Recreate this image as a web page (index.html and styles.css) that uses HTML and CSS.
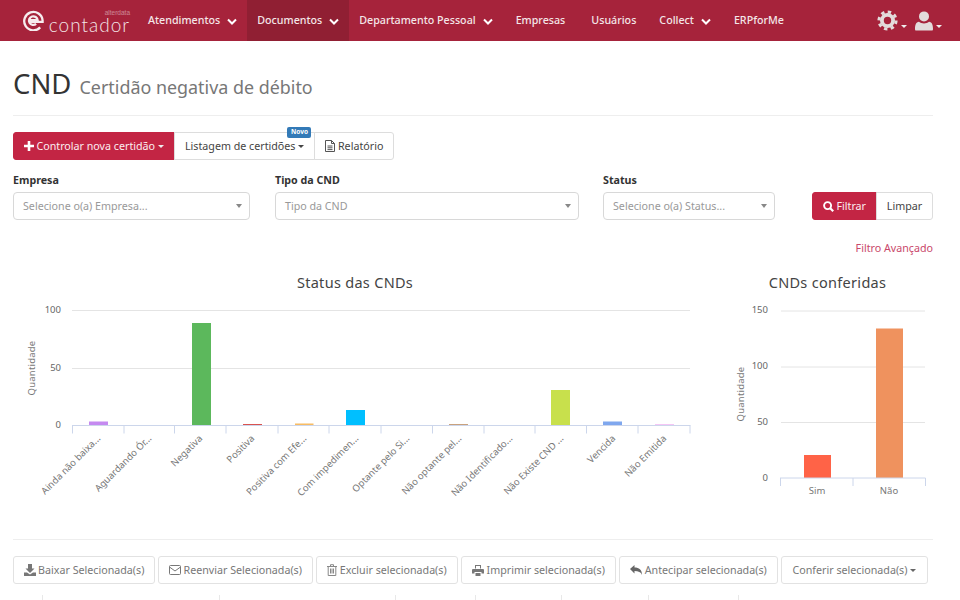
FILE: index.html
```html
<!DOCTYPE html>
<html lang="pt-BR">
<head>
<meta charset="utf-8">
<title>CND</title>
<link rel="stylesheet" href="styles.css">
</head>
<body>
<nav class="navbar">
  <a class="brand">
    <svg class="brand-icon" width="21" height="21" viewBox="0 0 21 21" fill="none" stroke="#f6ecee" stroke-width="2.300"><path d="M6.200 10.200h8.400a4.300 4.300 0 1 0-1.500 3.700"/><path d="M17.200 17.400A9.200 9.200 0 1 1 19.600 10.500v1.300H6.500"/></svg>
    <span class="brand-text"><small>alterdata</small><b>contador</b></span>
  </a>
  <a class="nav-item drop">Atendimentos<svg class="chev" width="10" height="7" viewBox="0 0 10 7"><path d="M1 1.500l4 4 4-4" fill="none" stroke="#fff" stroke-width="2"/></svg></a>
  <a class="nav-item drop active">Documentos<svg class="chev" width="10" height="7" viewBox="0 0 10 7"><path d="M1 1.500l4 4 4-4" fill="none" stroke="#fff" stroke-width="2"/></svg></a>
  <a class="nav-item drop">Departamento Pessoal<svg class="chev" width="10" height="7" viewBox="0 0 10 7"><path d="M1 1.500l4 4 4-4" fill="none" stroke="#fff" stroke-width="2"/></svg></a>
  <a class="nav-item plain">Empresas</a>
  <a class="nav-item plain">Usuários</a>
  <a class="nav-item drop">Collect<svg class="chev" width="10" height="7" viewBox="0 0 10 7"><path d="M1 1.500l4 4 4-4" fill="none" stroke="#fff" stroke-width="2"/></svg></a>
  <a class="nav-item plain">ERPforMe</a>
  <div class="nav-tools">
    <span class="tool">
      <svg width="21" height="21" viewBox="0 0 21 21"><circle cx="10.500" cy="10.500" r="5.600" fill="none" stroke="#e3dcdc" stroke-width="3.800"/><circle cx="10.500" cy="10.500" r="8.600" fill="none" stroke="#e3dcdc" stroke-width="3" stroke-dasharray="3.400 3.350"/></svg>
      <i class="caret light"></i>
    </span>
    <span class="tool">
      <svg width="18" height="20" viewBox="0 0 18 20"><circle cx="9" cy="5.400" r="5" fill="#e3dcdc"/><path d="M1 19.500c-.8 0-1-.6-1-1.500 0-3.800 1-7 4-7.200 1.300 1 3 1.600 5 1.600s3.700-.6 5-1.600c3 .2 4 3.400 4 7.200 0 .9-.2 1.500-1 1.500z" fill="#e3dcdc"/></svg>
      <i class="caret light"></i>
    </span>
  </div>
</nav>

<main class="page">
  <header class="page-header">
    <h1>CND <small>Certidão negativa de débito</small></h1>
  </header>

  <div class="btn-group top-group">
    <button class="btn primary"><svg class="ico" width="10" height="10" viewBox="0 0 10 10"><path d="M3.700 0h2.600v3.700H10v2.600H6.300V10H3.700V6.300H0V3.700h3.700z" fill="#fff"/></svg>Controlar nova certidão<i class="caret light"></i></button>
    <button class="btn has-badge">Listagem de certidões<i class="caret"></i><span class="badge">Novo</span></button>
    <button class="btn"><svg class="ico" width="10" height="12" viewBox="0 0 10 12" fill="none" stroke="#555" stroke-width="1"><path d="M.5.500h6l3 3v8h-9zM6.500.500v3h3M2.500 6h5M2.500 7.800h5M2.500 9.600h5"/></svg>Relatório</button>
  </div>

  <form class="filters">
    <div class="field f-empresa"><label>Empresa</label><div class="select">Selecione o(a) Empresa...<i class="caret grey"></i></div></div>
    <div class="field f-tipo"><label>Tipo da CND</label><div class="select">Tipo da CND<i class="caret grey"></i></div></div>
    <div class="field f-status"><label>Status</label><div class="select">Selecione o(a) Status...<i class="caret grey"></i></div></div>
    <div class="btn-group filter-actions">
      <button type="button" class="btn primary filter-btn"><svg class="ico" width="11" height="11" viewBox="0 0 11 11" fill="none" stroke="#fff"><circle cx="4.600" cy="4.600" r="3.500" stroke-width="1.900"/><path d="M7.200 7.200l3 3" stroke-width="2.200"/></svg>Filtrar</button>
      <button type="button" class="btn limpar">Limpar</button>
    </div>
  </form>
  <div class="advanced"><a>Filtro Avançado</a></div>

  <section class="charts">
    <svg class="chart chart-status" width="690" height="240" viewBox="0 0 690 240">
      <text class="title" x="342" y="23.500" text-anchor="middle">Status das CNDs</text>
      <path class="grid" d="M59 46.500H677M59 104.500H677"/>
      <g class="ylab" text-anchor="end"><text x="48" y="49">100</text><text x="48" y="107">50</text><text x="48" y="164">0</text></g>
      <text class="ytitle" transform="translate(22 104) rotate(-90)" text-anchor="middle">Quantidade</text>
      <g>
        <rect x="76" y="157.500" width="19" height="4" fill="#c58af0"/>
        <rect x="179" y="59" width="19" height="102.500" fill="#5cb85c"/>
        <rect x="230" y="160" width="19" height="1.500" fill="#d9534f"/>
        <rect x="282" y="159.500" width="18.500" height="2" fill="#f8bc63"/>
        <rect x="333" y="146" width="19" height="15.500" fill="#00bfff"/>
        <rect x="436" y="160" width="19" height="1.500" fill="#c9a27e"/>
        <rect x="538" y="126" width="19" height="35.500" fill="#c8e04c"/>
        <rect x="590" y="157.500" width="19" height="4" fill="#7fa7ee"/>
        <rect x="642" y="160" width="19" height="1.500" fill="#f5c6f5"/>
      </g>
      <path class="axis" d="M59 161.500H677.500M59.500 161.500v8M111 161.500v8M161.500 161.500v8M213 161.500v8M265 161.500v8M316 161.500v8M368 161.500v8M419.500 161.500v8M471 161.500v8M522 161.500v8M573.500 161.500v8M625 161.500v8M677 161.500v8"/>
      <g class="xlab" text-anchor="end">
        <text transform="translate(88 175) rotate(-45)">Ainda não baixa...</text>
        <text transform="translate(139 175) rotate(-45)">Aguardando Ór...</text>
        <text transform="translate(190 175) rotate(-45)">Negativa</text>
        <text transform="translate(242 175) rotate(-45)">Positiva</text>
        <text transform="translate(294 175) rotate(-45)">Positiva com Efe...</text>
        <text transform="translate(346 175) rotate(-45)">Com impedimen...</text>
        <text transform="translate(397 175) rotate(-45)">Optante pelo Si...</text>
        <text transform="translate(449 175) rotate(-45)">Não optante pel...</text>
        <text transform="translate(500 175) rotate(-45)">Não Identificado...</text>
        <text transform="translate(551 175) rotate(-45)">Não Existe CND ...</text>
        <text transform="translate(603 175) rotate(-45)">Vencida</text>
        <text transform="translate(654 175) rotate(-45)">Não Emitida</text>
      </g>
    </svg>
    <svg class="chart chart-conf" width="233" height="240" viewBox="0 0 233 240">
      <text class="title" x="127.500" y="23.500" text-anchor="middle">CNDs conferidas</text>
      <path class="grid" d="M81 47H225M81 103H225M81 158.500H225"/>
      <g class="ylab" text-anchor="end"><text x="68" y="49">150</text><text x="68" y="105">100</text><text x="68" y="161">50</text><text x="68" y="216.500">0</text></g>
      <text class="ytitle" transform="translate(44 130) rotate(-90)" text-anchor="middle">Quantidade</text>
      <rect x="104" y="191" width="27" height="23" fill="#ff6347"/>
      <rect x="176" y="64.500" width="27" height="149.500" fill="#ef925e"/>
      <path class="axis" d="M80 214H225.500M80.500 214v8M153 214v8M225.500 214v8"/>
      <g class="xlab" text-anchor="middle"><text x="117" y="230">Sim</text><text x="189" y="230">Não</text></g>
    </svg>
  </section>

  <hr class="divider">

  <div class="actions">
    <button class="btn act"><svg class="ico" width="12" height="12" viewBox="0 0 12 12" fill="#777"><path d="M4 0h4v4.500h2.500L6 9 1.500 4.500H4zM0 8.500h3L6 10.500 9 8.500h3V12H0z"/></svg>Baixar Selecionada(s)</button>
    <button class="btn act"><svg class="ico" width="12" height="10" viewBox="0 0 12 10" fill="none" stroke="#777"><rect x=".5" y=".5" width="11" height="9" rx="1"/><path d="M.5 2l5.500 4 5.500-4"/></svg>Reenviar Selecionada(s)</button>
    <button class="btn act"><svg class="ico" width="10" height="12" viewBox="0 0 10 12" fill="none" stroke="#888"><path d="M0 2.500h10M3.500 2.500V.700h3v1.800M1.200 2.500v9h7.600v-9M3.500 4.500v5M5 4.500v5M6.500 4.500v5"/></svg>Excluir selecionada(s)</button>
    <button class="btn act"><svg class="ico" width="12" height="11" viewBox="0 0 12 11" fill="#777"><path d="M3 0h6v3.500H8V1H4v2.500H3zM1 4h10a1 1 0 0 1 1 1v3.500H9.500V7h-7v1.500H0V5a1 1 0 0 1 1-1zM3.500 8h5v3h-5z"/></svg>Imprimir selecionada(s)</button>
    <button class="btn act"><svg class="ico" width="12" height="10" viewBox="0 0 12 10" fill="#666"><path d="M4.500 0v2.500c4.500 0 7.500 2 7.500 7.500-1-3-3.500-4-7.500-4v2.500L0 4z"/></svg>Antecipar selecionada(s)</button>
    <button class="btn act">Conferir selecionada(s)<i class="caret grey2"></i></button>
  </div>

  <div class="table-head">
    <span></span><span></span><span></span><span></span><span></span><span></span><span></span><span></span>
  </div>
</main>
</body>
</html>
```

FILE: styles.css
```css
* { box-sizing: border-box; }
html, body { height: 600px; overflow: hidden; }
body { margin: 0; background: #fff; color: #333; font: 10.7px/17px "Noto Sans", "Open Sans", sans-serif; }

.navbar { display: flex; align-items: stretch; height: 41px; background: #a6233b; color: #f4e6e8; }
.brand { display: flex; align-items: flex-start; width: 138px; padding: 9px 0 0 23px; flex: none; }
.brand-icon { flex: none; margin-top: 1px; }
.brand-text { display: flex; flex-direction: column; align-items: flex-end; margin-left: 4px; width: 82px; color: #f3e5e7; }
.brand-text small { font: 6.500px/7px "Liberation Sans", sans-serif; opacity: .5; }
.brand-text b { font: 300 19px/16px Lato, sans-serif; letter-spacing: 1px; margin-top: 1px; }
.nav-item { display: flex; align-items: center; height: 41px; white-space: nowrap; font-weight: 500; }
.drop { padding: 0 10px; }
.plain { padding: 0 13px; }
.active { background: #901f33; }
.chev { margin-left: 7px; margin-top: 2px; }
.nav-tools { margin-left: auto; display: flex; align-items: center; gap: 8px; padding-right: 18px; }
.tool { display: flex; align-items: flex-end; }
.tool .caret { margin: 0 0 3px 3px; border-left-width: 3px; border-right-width: 3px; border-top-width: 3px; }

.caret { display: inline-block; width: 0; height: 0; margin-left: 3px; vertical-align: middle; border-top: 3.500px solid #444; border-left: 3.500px solid transparent; border-right: 3.500px solid transparent; }
.caret.light { border-top-color: #eee; }
.caret.grey { border-top-color: #888; border-left-width: 3px; border-right-width: 3px; border-top-width: 4.500px; }
.caret.grey2 { border-top-color: #666; }

.page { padding: 0 27px 0 13px; }
.page-header { height: 75px; border-bottom: 1px solid #eee; padding-top: 25px; }
h1 { margin: 0; font-size: 27.500px; line-height: 36px; font-weight: 400; color: #333; }
h1 small { font-size: 17.900px; color: #777; margin-left: 1px; }

.btn { position: relative; display: inline-flex; align-items: center; justify-content: center; height: 28px; padding: 0 10px; background: #fff; border: 1px solid #ddd; border-radius: 3px; font: inherit; color: #444; white-space: nowrap; }
.primary { background: #c32544; border-color: #c32544; color: #fbeef0; }
.ico { margin-right: 2.500px; flex: none; }
.btn-group { display: flex; }
.btn-group .btn { border-radius: 0; margin-left: -1px; }
.btn-group .btn:first-child { border-radius: 3px 0 0 3px; margin-left: 0; padding: 0 9px 0 9px; }
.btn-group .btn:last-child { border-radius: 0 3px 3px 0; }
.top-group .primary { width: 162px; }
.top-group { margin-top: 16px; }
.badge { position: absolute; top: -6px; right: 3px; height: 11px; width: 24px; background: #337ab7; color: #fff; border-radius: 2px; font-size: 6.500px; font-weight: 700; line-height: 10px; text-align: center; }

.filters { display: flex; align-items: flex-end; margin-top: 12px; }
.field { flex: none; }
.field label { display: block; font-weight: 700; line-height: 17px; margin-bottom: 3px; color: #333; }
.f-empresa { width: 237px; margin-right: 25px; }
.f-tipo { width: 304px; margin-right: 24px; }
.f-status { width: 172px; margin-right: 37px; }
.select { display: flex; align-items: center; justify-content: space-between; height: 28px; padding: 0 7px 0 9px; border: 1px solid #d8d8d8; border-radius: 4px; color: #999; }
.filter-btn { width: 65px; }
.limpar { width: 57px; }
.advanced { margin-top: 20px; text-align: right; color: #c9486a; line-height: 17px; }

.charts { display: flex; margin-top: 7px; height: 240px; }
.chart { flex: none; display: block; }
.chart-conf { margin-left: -3px; }
.title { font-size: 14.500px; fill: #444; letter-spacing: .3px; }
.grid { stroke: #e4e4e4; fill: none; }
.axis { stroke: #ccd6eb; fill: none; }
.ylab text { font-size: 9.500px; fill: #666; }
.ytitle { font-size: 9.500px; fill: #777; letter-spacing: .2px; }
.xlab text { font-size: 9.500px; fill: #777; }

.divider { height: 1px; margin: 35px 0 0; border: 0; background: #eee; }
.actions { display: flex; gap: 3px; margin-top: 16px; }
.act { color: #777; height: 28px; border-color: #e2e2e2; }
.act:nth-child(1) { width: 142px; }
.act:nth-child(2) { width: 155px; }
.act:nth-child(3) { width: 142px; }
.act:nth-child(4) { width: 155px; }
.act:nth-child(5) { width: 159px; }
.act:nth-child(6) { width: 147px; }
.table-head { display: grid; grid-template-columns: 30px 177px 176px 80px 86px 87px 90px 195px; height: 10px; margin-top: 11px; }
.table-head span { border-right: 1px solid #e8e8e8; }
.table-head span:last-child { border-right: 0; }
```
